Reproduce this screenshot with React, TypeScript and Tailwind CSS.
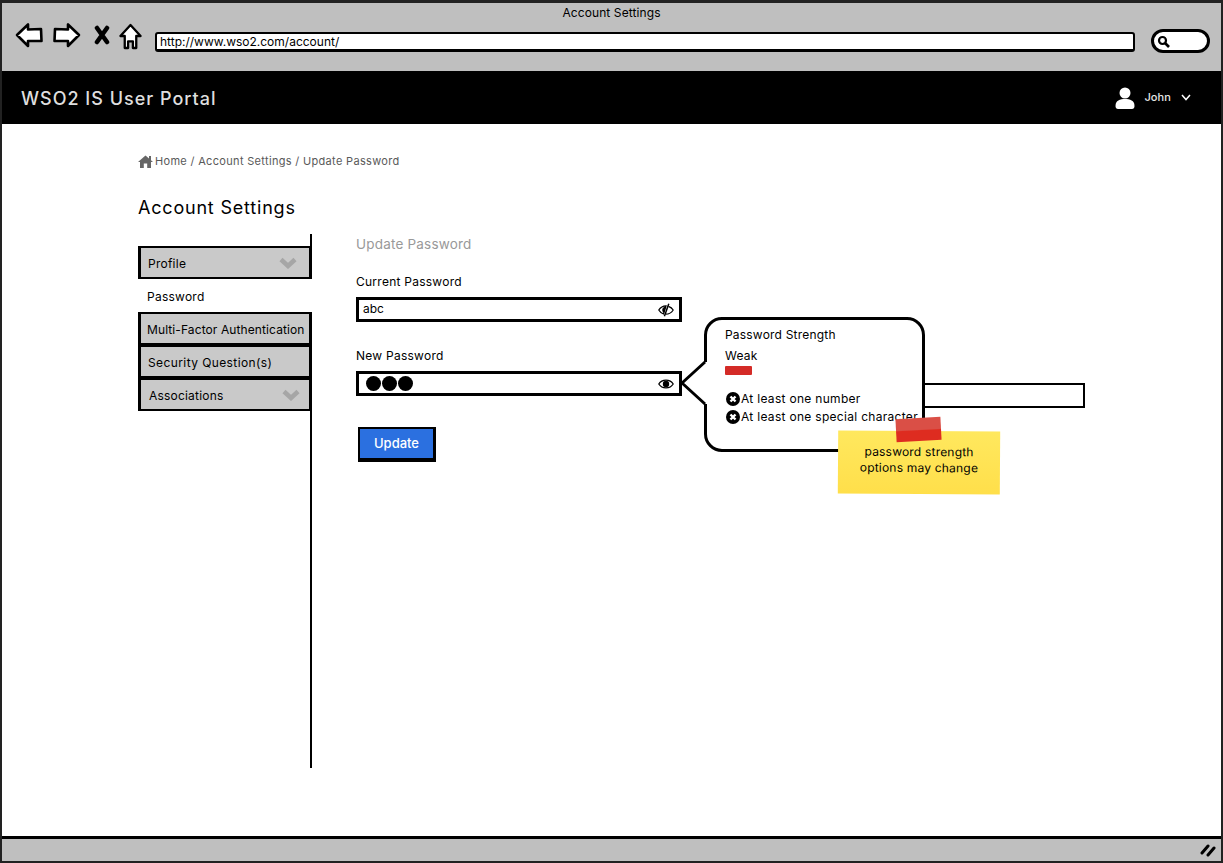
import React from 'react';

const BackIcon = () => (
  <svg width="28" height="26" viewBox="0 0 28 26" fill="white" stroke="black" strokeWidth="2.6" strokeLinejoin="round">
    <path d="M2 13 L13 2.5 L13 7.5 L26 7 L26.5 19 L13 19 L13 24 Z" />
  </svg>
);

const ForwardIcon = () => (
  <svg width="28" height="26" viewBox="0 0 28 26" fill="white" stroke="black" strokeWidth="2.6" strokeLinejoin="round">
    <path d="M26 13 L15 2.5 L15 7.5 L2 7 L1.5 19 L15 19 L15 24 Z" />
  </svg>
);

const StopIcon = () => (
  <svg width="16" height="20" viewBox="0 0 16 20" fill="none" stroke="black" strokeWidth="4.5" strokeLinecap="round">
    <path d="M3 3 L13 17 M13 3 L3 17" />
  </svg>
);

const HomeIcon = () => (
  <svg width="23" height="27" viewBox="0 0 24 28" fill="white" stroke="black" strokeWidth="2.4" strokeLinejoin="round">
    <path d="M12 2 L22.5 13.5 L18 13.5 L18 26 L14.5 26 L14.5 19 L9.5 19 L9.5 26 L6 26 L6 13.5 L1.5 13.5 Z" />
  </svg>
);

const Chevron = () => (
  <svg width="18" height="12" viewBox="0 0 18 12" fill="none" stroke="#a6a6a6" strokeWidth="4.5">
    <path d="M2 2.5 L9 9 L16 2.5" />
  </svg>
);

const XCircle = () => (
  <svg width="14" height="14" viewBox="0 0 14 14" className="shrink-0">
    <circle cx="7" cy="7" r="7" fill="black" />
    <path d="M4.5 4.5 L9.5 9.5 M9.5 4.5 L4.5 9.5" stroke="white" strokeWidth="2.4" />
  </svg>
);

const EyeOpen = () => (
  <svg width="16" height="12" viewBox="0 0 16 12">
    <path d="M0.8 6 C4 0.8 12 0.8 15.2 6 C12 11.2 4 11.2 0.8 6 Z" fill="white" stroke="black" strokeWidth="1.3" />
    <circle cx="8" cy="6" r="3.2" fill="black" />
  </svg>
);

const EyeClosed = () => (
  <svg width="16" height="14" viewBox="0 0 16 14" fill="none" stroke="black">
    <path d="M0.8 7 C3 3.4 6 2.8 8 2.8 L5.5 11 C3.5 10.4 2 9 0.8 7 Z" strokeWidth="1.3" />
    <path d="M4.5 7 C4.5 5 6 4 7.5 3.5 L5.8 9.5 C5 9 4.5 8 4.5 7 Z" fill="black" strokeWidth="0.5" />
    <path d="M10.5 3.4 C12.6 4.2 14.2 5.4 15.2 7 C13.4 10 10.4 11.2 7.6 11.2" strokeWidth="1.2" />
    <path d="M10.8 0.8 L6.4 13.2" strokeWidth="1.5" />
  </svg>
);

const MenuItem = ({ label, className }: { label: string; className: string }) => (
  <div className={`flex h-[33px] w-[174px] items-center justify-between border-x-[3px] border-y-[2px] border-black bg-[#c9c9c9] pt-[2px] text-[12px] whitespace-nowrap text-black ${className}`}>
    <span>{label}</span>
  </div>
);

const Field = ({ label, children }: { label: string; children: React.ReactNode }) => (
  <div className="flex flex-col">
    <label className="mb-[7px] h-[16px] text-[12px] leading-[16px] tracking-[0.25px] text-black">{label}</label>
    <div className="flex h-[25px] w-[326px] items-center justify-between border-[3px] border-black bg-white pl-[4px] pr-[5px] text-[12px] text-black">
      {children}
    </div>
  </div>
);

const App = () => {
  return (
    <div className='flex h-[863px] w-[1223px] flex-col overflow-hidden border-[2px] border-t-[3px] border-[#222] bg-white font-["Inter",sans-serif]'>
      <div className="flex h-[68px] shrink-0 flex-col bg-[#bfbfbf]">
        <div className="pt-[2px] text-center text-[12px] leading-[16px] tracking-[0.1px] text-black">Account Settings</div>
        <div className="mt-[1px] flex items-start pl-[13px]">
          <BackIcon />
          <div className="ml-[10px]">
            <ForwardIcon />
          </div>
          <div className="ml-[13px] mt-[3px]">
            <StopIcon />
          </div>
          <div className="ml-[9px] mt-[1px]">
            <HomeIcon />
          </div>
          <div className="ml-[13px] mt-[10px] flex h-[20px] w-[980px] items-center rounded-[3px] border-[2px] border-b-[3px] border-black bg-white pl-[3px] text-[12px] leading-none text-black">
            http://www.wso2.com/account/
          </div>
          <div className="ml-[16px] mt-[7px] flex h-[24px] w-[59px] items-center rounded-full border-[3px] border-black bg-white pl-[3px]">
            <svg width="13" height="13" viewBox="0 0 13 13" fill="none" stroke="black">
              <circle cx="5.5" cy="5.5" r="3.5" strokeWidth="2.2" />
              <path d="M8 8 L12 12" strokeWidth="2.6" />
            </svg>
          </div>
        </div>
      </div>

      <div className="flex h-[53px] shrink-0 items-center justify-between bg-black pl-[19px] pr-[30px]">
        <div className="pt-[2px] text-[18px] font-medium tracking-[1px] text-[#dedede]">WSO2 IS User Portal</div>
        <div className="flex items-center text-white">
          <svg width="20" height="22" viewBox="0 0 20 22" fill="white">
            <ellipse cx="10" cy="6" rx="5.5" ry="5.5" />
            <path d="M0.5 19 C0.5 13.5 5 12 10 12 C15 12 19.5 13.5 19.5 19 C19.5 21 18.5 22 17 22 L3 22 C1.5 22 0.5 21 0.5 19 Z" />
          </svg>
          <span className="ml-[9px] text-[11px] font-medium tracking-[0.1px] text-[#e6e6e6]">John</span>
          <svg className="ml-[10px]" width="10" height="7" viewBox="0 0 10 7" fill="none" stroke="white" strokeWidth="1.5">
            <path d="M1 1 L5 5.5 L9 1" />
          </svg>
        </div>
      </div>

      <div className="flex flex-1 flex-col pl-[136px]">
        <div className="mt-[29px] flex h-[16px] items-center text-[11px] tracking-[0.32px] text-[#595959]">
          <svg width="15" height="13" viewBox="0 0 15 13" fill="#666">
            <path d="M7.5 0.5 L11 3.5 L11 1 L13 1 L13 5.2 L15 7 L13 7 L13 13 L9.2 13 L9.2 8.6 L5.8 8.6 L5.8 13 L2 13 L2 7 L0 7 Z" />
          </svg>
          <span className="ml-[2px]">Home / Account Settings / Update Password</span>
        </div>
        <h1 className="mt-[27px] h-[24px] text-[18px] leading-[24px] tracking-[0.8px] text-black">Account Settings</h1>

        <div className="mt-[14px] flex">
          <div className="h-[534px] w-[174px] border-r-[2px] border-black pt-[12px]">
            <div className="relative">
              <MenuItem label="Profile" className="pl-[7px] tracking-[0.25px]" />
              <div className="absolute right-[13px] top-[11px]">
                <Chevron />
              </div>
            </div>
            <div className="flex h-[33px] w-[174px] items-center bg-white pl-[9px] pt-[2px] text-[12px] tracking-[0.25px] text-black">
              Password
            </div>
            <MenuItem label="Multi-Factor Authentication" className="pl-[6px] tracking-[0.1px]" />
            <MenuItem label="Security Question(s)" className="pl-[7px] tracking-[0.4px]" />
            <div className="relative">
              <MenuItem label="Associations" className="pl-[8px] tracking-[0.2px]" />
              <div className="absolute right-[10px] top-[11px]">
                <Chevron />
              </div>
            </div>
          </div>

          <div className="relative ml-[44px] flex flex-col">
            <h2 className="mt-[2px] h-[16px] text-[13.5px] leading-[16px] tracking-[0.2px] text-[#999]">Update Password</h2>
            <div className="mt-[22px]">
              <Field label="Current Password">
                <span className="pb-[1px]">abc</span>
                <EyeClosed />
              </Field>
            </div>
            <div className="mt-[26px]">
              <Field label="New Password">
                <div className="ml-[3px] flex gap-[1px]">
                  <span className="h-[15px] w-[15px] rounded-full bg-black" />
                  <span className="h-[15px] w-[15px] rounded-full bg-black" />
                  <span className="h-[15px] w-[15px] rounded-full bg-black" />
                </div>
                <EyeOpen />
              </Field>
            </div>
            <button className="mt-[31px] ml-[2px] flex h-[35px] w-[78px] items-center justify-center border-[2px] border-b-[4px] border-r-[3px] border-black bg-[#2b70e0] text-[13px] font-medium text-white">
              Update
            </button>

            {/* second input sticking out behind the popover */}
            <div className="absolute left-[560px] top-[149px] h-[25px] w-[169px] border-[2px] border-black bg-white" />

            {/* popover */}
            <div className="absolute left-[348px] top-[83px] h-[135px] w-[221px] rounded-[18px] border-[3px] border-black bg-white pl-[18px] pt-[6px] text-[12px] tracking-[0.2px] text-black">
              <div className="leading-[18px]">Password Strength</div>
              <div className="mt-[3px] leading-[18px]">Weak</div>
              <div className="mt-[1px] h-[9px] w-[27px] rounded-[1px] bg-[#d42b27]" />
              <div className="mt-[15px] ml-[1px] flex items-center gap-[1px] leading-[18px] tracking-[0.3px]">
                <XCircle />
                <span>At least one number</span>
              </div>
              <div className="ml-[1px] flex items-center gap-[1px] leading-[18px] tracking-[0.3px] whitespace-nowrap">
                <XCircle />
                <span>At least one special character</span>
              </div>
            </div>
            <svg className="absolute left-[325px] top-[126px]" width="26" height="46" viewBox="0 0 26 46" fill="white" stroke="none">
              <path d="M0 23 L24 2 L26 2 L26 44 L24 44 Z" />
              <path d="M24 2 L1 23 L24 44" fill="none" stroke="black" strokeWidth="3" />
            </svg>

            {/* sticky note */}
            <div className="absolute left-[482px] top-[197px] flex h-[63px] w-[162px] rotate-[0.4deg] flex-col items-center justify-center bg-gradient-to-b from-[#ffe85e] to-[#ffdf4a] pb-[5px] text-center text-[12px] leading-[16px] tracking-[0.2px] text-black">
              <div>password strength</div>
              <div>options may change</div>
            </div>
            <div className="absolute left-[540px] top-[184px] h-[23px] w-[45px] -rotate-[3deg] bg-gradient-to-b from-[#da4f46] from-50% to-[#de2c20] to-55%" />
          </div>
        </div>
      </div>

      <div className="flex h-[25px] shrink-0 items-center justify-end border-t-[3px] border-black bg-[#bfbfbf] pr-[5px]">
        <svg width="16" height="14" viewBox="0 0 16 14" fill="none" stroke="black" strokeWidth="3" strokeLinecap="round">
          <path d="M2 10 L8 3 M8 12 L14 5" />
        </svg>
      </div>
    </div>
  );
};

export default App;
